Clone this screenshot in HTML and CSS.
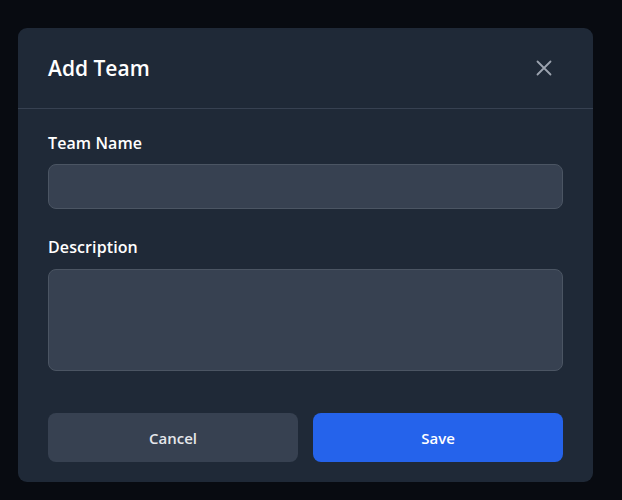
FILE: index.html
```html
<!DOCTYPE html>
<html>
<head>
<meta charset="utf-8">
<link rel="stylesheet" href="styles.css">
</head>
<body>
<div class="overlay">
  <div class="modal">
    <div class="modal-header">
      <h2 class="title">Add Team</h2>
      <button class="close" aria-label="Close">
        <svg width="18" height="18" viewBox="0 0 18 18" fill="none" stroke="#9ca3af" stroke-width="1.8" stroke-linecap="round"><path d="M2.5 2.5L15.5 15.5M15.5 2.5L2.5 15.5"/></svg>
      </button>
    </div>
    <div class="modal-body">
      <label class="label label-first">Team Name</label>
      <input class="field" type="text">
      <label class="label label-next">Description</label>
      <textarea class="field area"></textarea>
      <div class="actions">
        <button class="btn btn-cancel">Cancel</button>
        <button class="btn btn-save">Save</button>
      </div>
    </div>
  </div>
</div>
</body>
</html>
```
FILE: styles.css
```css
* { box-sizing: border-box; }
html, body { margin: 0; padding: 0; }
body {
  background: #080b11;
  font-family: "Open Sans", "Noto Sans", sans-serif;
  width: 622px;
  height: 500px;
  overflow: hidden;
}
.overlay {
  padding: 28px 0 0 18px;
}
.modal {
  width: 575px;
  height: 454px;
  background: #1f2937;
  border-radius: 9px;
  display: flex;
  flex-direction: column;
}
.modal-header {
  height: 81px;
  border-bottom: 1px solid #374151;
  display: flex;
  align-items: center;
  justify-content: space-between;
  padding: 0 40px 0 30px;
}
.title {
  margin: 0;
  color: #ffffff;
  font-size: 21px;
  font-weight: 600;
}
.close {
  background: none;
  border: 0;
  padding: 0;
  width: 18px;
  height: 18px;
  display: flex;
}
.modal-body {
  padding: 0 30px 20px 30px;
  display: flex;
  flex-direction: column;
}
.label {
  color: #ffffff;
  font-size: 16px;
  font-weight: 600;
  line-height: 24px;
  letter-spacing: 0.1px;
}
.label-first { margin-top: 22px; margin-bottom: 9px; }
.label-next { margin-top: 26px; margin-bottom: 10px; }
.field {
  display: block;
  width: 515px;
  height: 45px;
  background: #374151;
  border: 1px solid #4b5563;
  border-radius: 8px;
  color: #fff;
  font-family: inherit;
  font-size: 15px;
  padding: 0 12px;
  margin: 0;
  outline: none;
}
.area {
  height: 102px;
  resize: none;
}
.actions {
  margin-top: 42px;
  display: flex;
  gap: 15px;
}
.btn {
  flex: 1;
  height: 49px;
  border: 0;
  border-radius: 8px;
  color: #ffffff;
  font-family: inherit;
  font-size: 15px;
  font-weight: 600;
}
.btn-cancel { background: #374151; color: #e5e7eb; }
.btn-save { background: #2563eb; }
```
